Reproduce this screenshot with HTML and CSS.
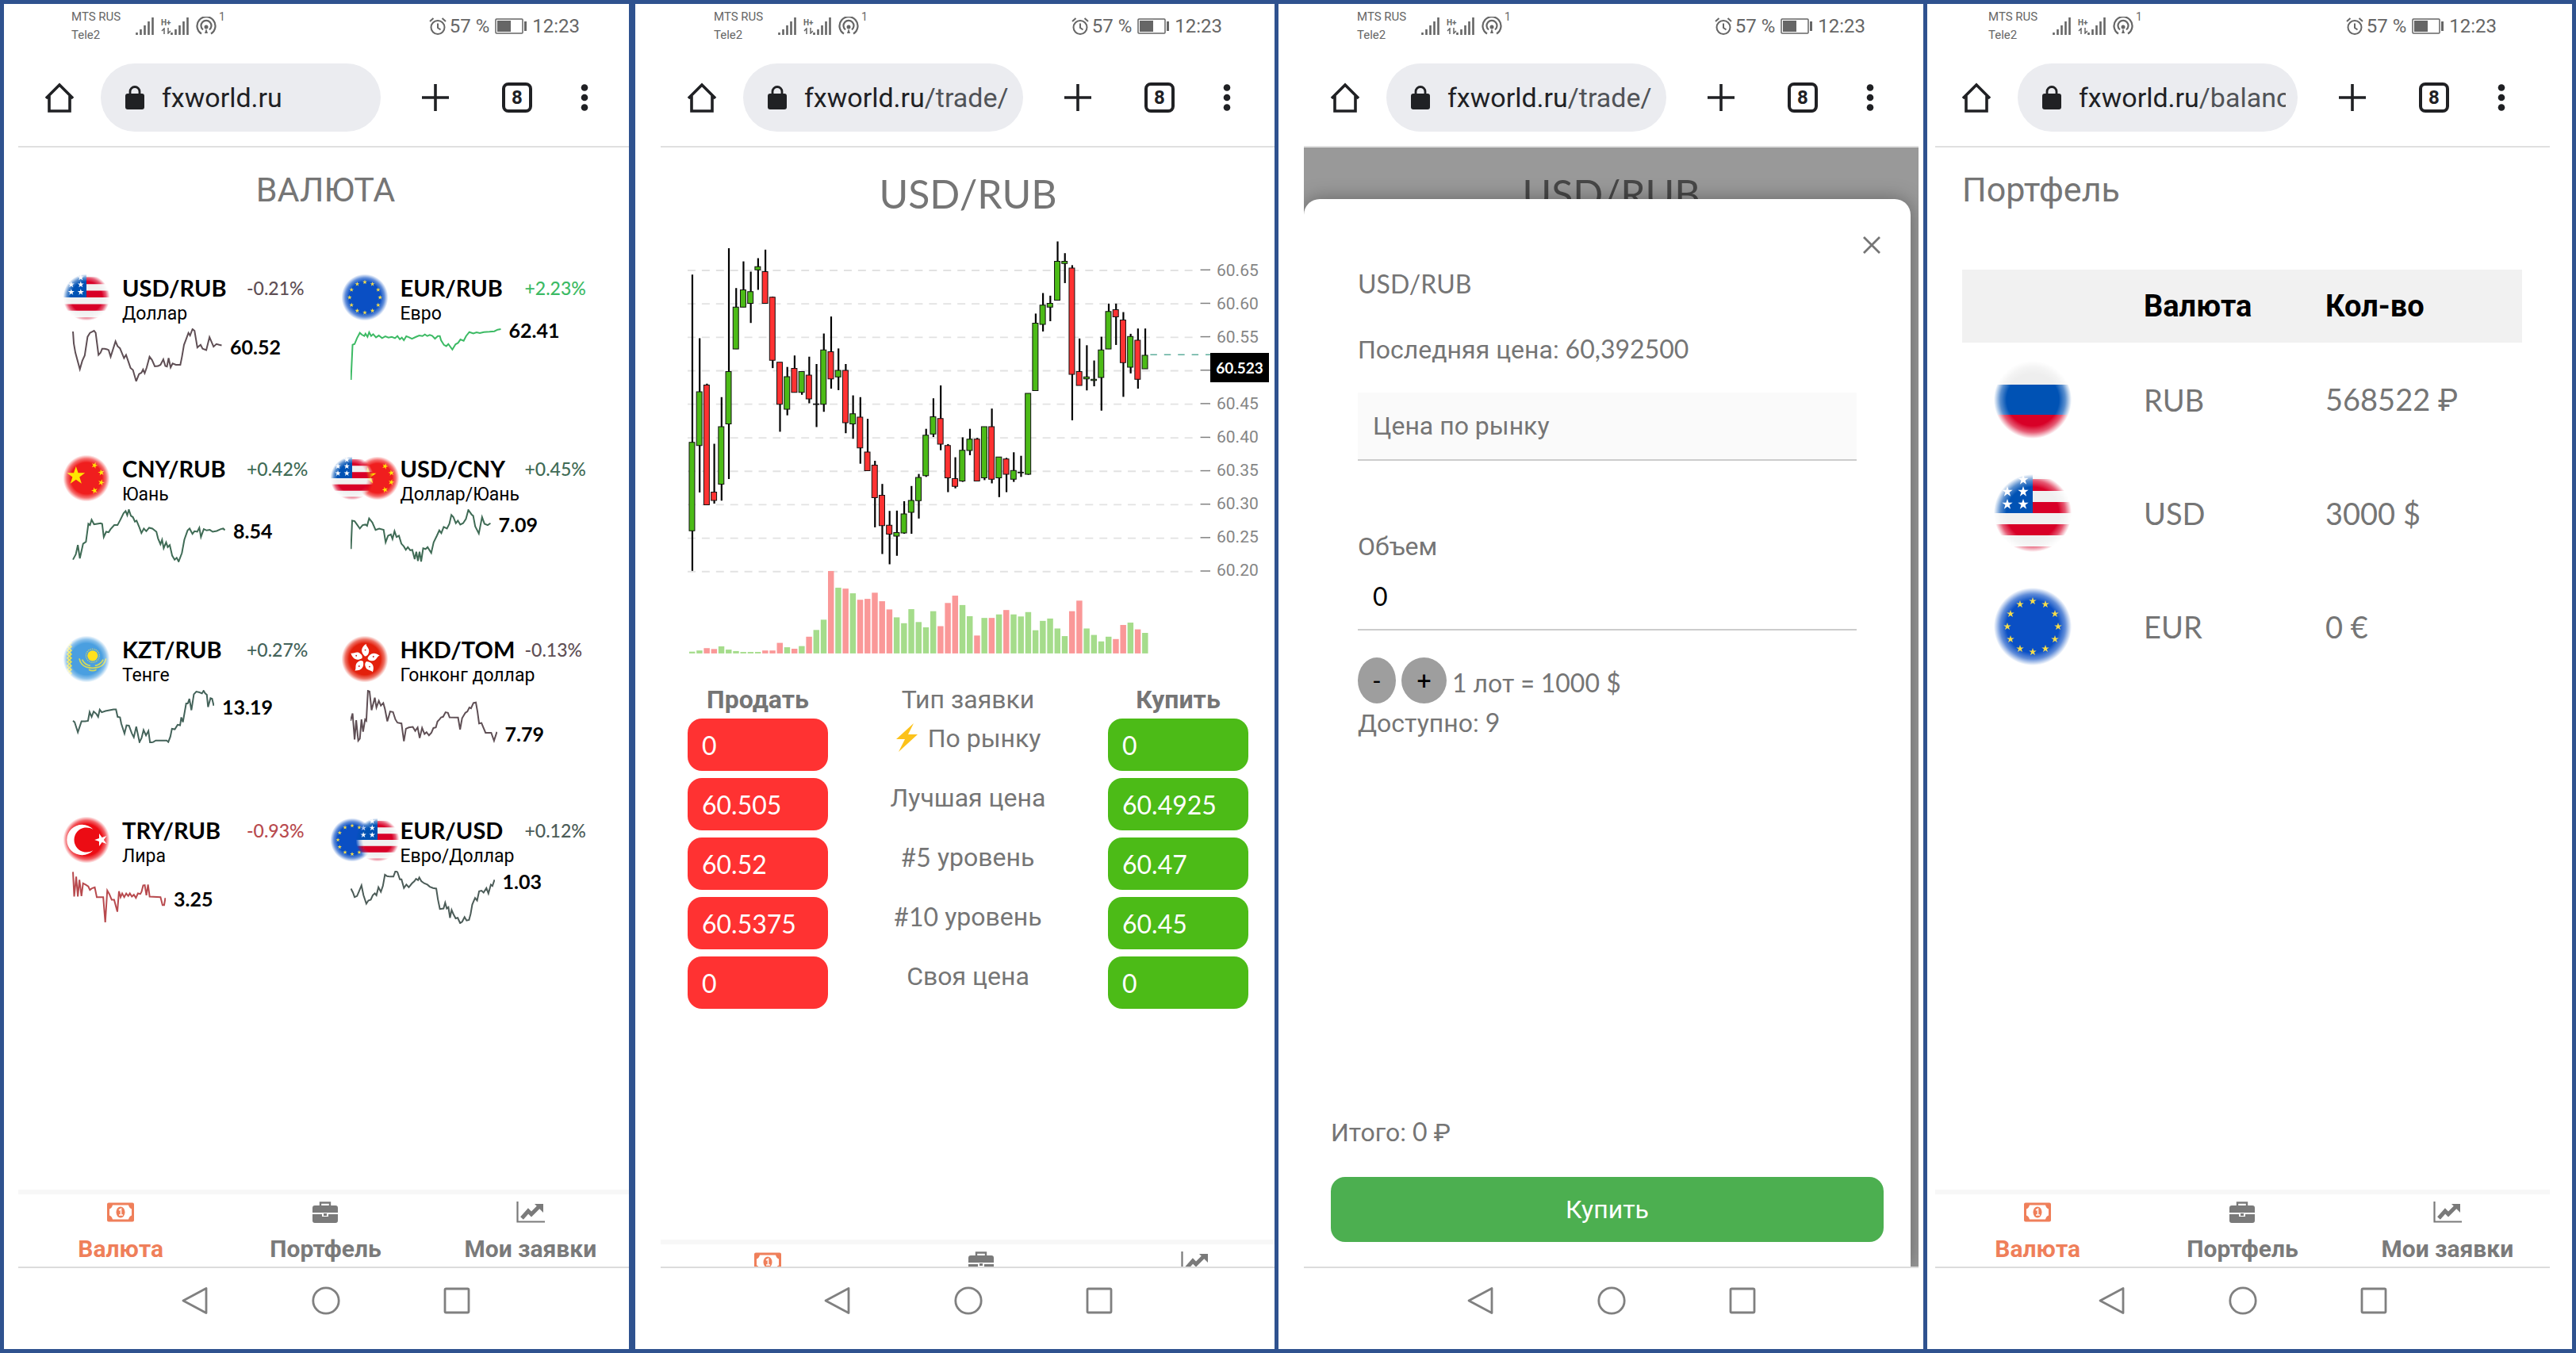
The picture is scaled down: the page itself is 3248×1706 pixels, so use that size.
FILE: index.html
```html
<!DOCTYPE html>
<html lang="ru">
<head>
<meta charset="utf-8">
<meta name="viewport" content="width=device-width, initial-scale=1">
<title>fxworld.ru</title>
<link rel="stylesheet" href="styles.css">
</head>
<body>
<svg class="defs" aria-hidden="true">
  <defs>
    <radialGradient id="fade" gradientUnits="userSpaceOnUse" cx="0" cy="0" r="50">
      <stop offset="0.66" stop-color="#fff"/>
      <stop offset="0.82" stop-color="#fff" stop-opacity="0.65"/>
      <stop offset="0.98" stop-color="#fff" stop-opacity="0"/>
    </radialGradient>
    <mask id="soft" maskUnits="userSpaceOnUse" x="-50" y="-50" width="100" height="100"><circle r="50" fill="url(#fade)"/></mask>
    <polygon id="star" points="0,-10 2.3,-3.1 9.5,-3.1 3.7,1.2 5.9,8.1 0,3.9 -5.9,8.1 -3.7,1.2 -9.5,-3.1 -2.3,-3.1"/>
    <path id="petal" d="M0 -6C-9 -14 -9 -24 3 -32C1 -27 12 -22 8 -13C7 -9 4 -6 0 -6Z"/>

    <symbol id="flag-us" viewBox="-50 -50 100 100"><g mask="url(#soft)">
      <rect x="-50" y="-50" width="100" height="100" fill="#f0f0f0"/>
      <path d="M-50 -43H50V-28H-50ZM-50 -14H50V0H-50ZM-50 14H50V28H-50ZM-50 42H50V50H-50Z" fill="#d80027"/>
      <rect x="-50" y="-50" width="50" height="50" fill="#0052b4"/>
      <g fill="#fff"><use href="#star" transform="translate(-12 -42) scale(.7)"/><use href="#star" transform="translate(-32 -27) scale(.7)"/><use href="#star" transform="translate(-12 -27) scale(.7)"/><use href="#star" transform="translate(-32 -11) scale(.7)"/><use href="#star" transform="translate(-12 -11) scale(.7)"/></g>
    </g></symbol>
    <symbol id="flag-eu" viewBox="-50 -50 100 100"><g mask="url(#soft)">
      <rect x="-50" y="-50" width="100" height="100" fill="#0a4fc4"/>
      <g fill="#f5dc4a"><use href="#star" transform="translate(0 -32) scale(.5)"/><use href="#star" transform="translate(16 -28) scale(.5)"/><use href="#star" transform="translate(28 -16) scale(.5)"/><use href="#star" transform="translate(32 0) scale(.5)"/><use href="#star" transform="translate(28 16) scale(.5)"/><use href="#star" transform="translate(16 28) scale(.5)"/><use href="#star" transform="translate(0 32) scale(.5)"/><use href="#star" transform="translate(-16 28) scale(.5)"/><use href="#star" transform="translate(-28 16) scale(.5)"/><use href="#star" transform="translate(-32 0) scale(.5)"/><use href="#star" transform="translate(-28 -16) scale(.5)"/><use href="#star" transform="translate(-16 -28) scale(.5)"/></g>
    </g></symbol>
    <symbol id="flag-ru" viewBox="-50 -50 100 100"><g mask="url(#soft)">
      <rect x="-50" y="-50" width="100" height="100" fill="#eee"/>
      <rect x="-50" y="-19" width="100" height="38" fill="#0052b4"/>
      <rect x="-50" y="19" width="100" height="31" fill="#d80027"/>
    </g></symbol>
    <symbol id="flag-cn" viewBox="-50 -50 100 100"><g mask="url(#soft)">
      <rect x="-50" y="-50" width="100" height="100" fill="#f01e1e"/>
      <g fill="#ffe600"><use href="#star" transform="translate(-22 -5) scale(2)"/><use href="#star" transform="translate(17 -27) rotate(20) scale(.7)"/><use href="#star" transform="translate(31 -12) rotate(-10) scale(.7)"/><use href="#star" transform="translate(31 9) rotate(15) scale(.7)"/><use href="#star" transform="translate(17 26) rotate(-15) scale(.7)"/></g>
    </g></symbol>
    <symbol id="flag-kz" viewBox="-50 -50 100 100"><g mask="url(#soft)">
      <rect x="-50" y="-50" width="100" height="100" fill="#4a9fe0"/>
      <path d="M-40 -50l8 8 -8 8 8 8 -8 8 8 8 -8 8 8 8 -8 8 8 8 -8 8 8 8 -8 8M-32 -50l-8 8 8 8 -8 8 8 8 -8 8 8 8 -8 8 8 8 -8 8 8 8 -8 8 8 8" fill="none" stroke="#e8e04a" stroke-width="3"/>
      <circle cx="13" cy="-7" r="14" fill="none" stroke="#d8d860" stroke-width="2" stroke-dasharray="2 2"/>
      <circle cx="13" cy="-7" r="11" fill="#ffe11e"/>
      <path d="M-15 -1Q-12 13 0 17Q13 21 26 17Q38 13 41 -1M-9 1Q-4 12 8 14M35 1Q30 12 18 14M5 22Q13 27 21 22" fill="none" stroke="#d3d85a" stroke-width="3"/>
    </g></symbol>
    <symbol id="flag-hk" viewBox="-50 -50 100 100"><g mask="url(#soft)">
      <rect x="-50" y="-50" width="100" height="100" fill="#e3200c"/>
      <g fill="#fff"><use href="#petal"/><use href="#petal" transform="rotate(72)"/><use href="#petal" transform="rotate(144)"/><use href="#petal" transform="rotate(216)"/><use href="#petal" transform="rotate(288)"/></g>
      <g fill="#c22"><circle cx="1" cy="-19" r="1.6"/><circle cx="18" cy="-5" r="1.6"/><circle cx="10" cy="16" r="1.6"/><circle cx="-12" cy="15" r="1.6"/><circle cx="-18" cy="-7" r="1.6"/></g>
    </g></symbol>
    <symbol id="flag-tr" viewBox="-50 -50 100 100"><g mask="url(#soft)">
      <rect x="-50" y="-50" width="100" height="100" fill="#ec0c14"/>
      <path d="M14 -22A32 32 0 1 0 14 22A26 26 0 1 1 14 -22Z" fill="#fff"/>
      <use href="#star" fill="#fff" transform="translate(31 0) rotate(-18) scale(1.4)"/>
    </g></symbol>

    <symbol id="signal" viewBox="0 0 24 22"><path d="M1.5 19V22M6.5 15V22M11.5 10V22M16.500 5V22M21.500 0V22" stroke="currentColor" stroke-width="2.600"/></symbol>
    <symbol id="arrows" viewBox="0 0 14 8"><path d="M4 8V1L1 4M9 0V7L12 4" fill="none" stroke="currentColor" stroke-width="1.500"/></symbol>
    <symbol id="hotspot" viewBox="0 0 26 24"><g fill="none" stroke="currentColor" stroke-width="2.200"><path d="M7 21.500A11.500 11.500 0 1 1 19 21.500M9 16.500A6.500 6.500 0 1 1 17 16.500"/></g><circle cx="13" cy="13" r="2.500" fill="currentColor"/><path d="M11 21L13 15L15 21Z" fill="currentColor"/></symbol>
    <symbol id="alarm" viewBox="0 0 22 22"><g fill="none" stroke="currentColor" stroke-width="2"><circle cx="11" cy="12.500" r="8.500"/><path d="M11 7.500V13L14.500 15.500M1 5L5.500 1M21 5L16.500 1"/></g></symbol>
    <symbol id="battery" viewBox="0 0 40 20"><rect x="1" y="1" width="34" height="18" rx="1" fill="none" stroke="currentColor" stroke-width="1.500"/><rect x="3" y="3" width="17" height="14" fill="currentColor"/><rect x="37" y="4" width="3" height="12" fill="currentColor"/></symbol>
    <symbol id="home" viewBox="0 0 38 38"><path d="M2 20L19 3L36 20M6 17V36H32V17" fill="none" stroke="currentColor" stroke-width="3.600"/></symbol>
    <symbol id="lock" viewBox="0 0 24 30"><rect x="0" y="10" width="24" height="20" rx="3" fill="currentColor"/><path d="M6 11V7.500A6 6 0 0 1 18 7.500V11" fill="none" stroke="currentColor" stroke-width="2.800"/></symbol>
    <symbol id="plus" viewBox="0 0 34 34"><path d="M17 0V34M0 17H34" stroke="currentColor" stroke-width="3.600"/></symbol>
    <symbol id="dots" viewBox="0 0 10 34"><g fill="currentColor"><circle cx="5" cy="4.500" r="4.300"/><circle cx="5" cy="17" r="4.300"/><circle cx="5" cy="29.500" r="4.300"/></g></symbol>
    <symbol id="money" viewBox="0 0 34 24"><path fill-rule="evenodd" d="M2 0H32Q34 0 34 2V22Q34 24 32 24H2Q0 24 0 22V2Q0 0 2 0ZM7 3Q6 7 3 8V16Q6 17 7 21H27Q28 17 31 16V8Q28 7 27 3Z" fill="currentColor"/><ellipse cx="17" cy="12" rx="5.500" ry="7" fill="currentColor"/><path d="M15 9.500L17.500 8V15M15 15.500H20" fill="none" stroke="#fff" stroke-width="1.600"/></symbol>
    <symbol id="case" viewBox="0 0 32 27"><path d="M10 5V1.500H22V5" fill="none" stroke="currentColor" stroke-width="2.400"/><path fill="currentColor" d="M3 5H29Q32 5 32 8V14H0V8Q0 5 3 5ZM0 16H12V19H20V16H32V24Q32 27 29 27H3Q0 27 0 24Z"/><rect x="14" y="15" width="4" height="3" fill="currentColor"/></symbol>
    <symbol id="trend" viewBox="0 0 36 27"><path d="M1.500 0V25.500H36" fill="none" stroke="currentColor" stroke-width="2.200"/><path d="M7 21L15 12L19 16L29 6" fill="none" stroke="currentColor" stroke-width="5"/><path d="M23 3H34V14Z" fill="currentColor"/></symbol>
    <symbol id="nav-back" viewBox="0 0 36 36"><path d="M3 18L32 2.500V33.500Z" fill="none" stroke="currentColor" stroke-width="2.800" stroke-linejoin="round"/></symbol>
    <symbol id="nav-home" viewBox="0 0 36 36"><circle cx="18" cy="18" r="16.200" fill="none" stroke="currentColor" stroke-width="2.800"/></symbol>
    <symbol id="nav-recent" viewBox="0 0 36 36"><rect x="3" y="3" width="30" height="30" rx="1.500" fill="none" stroke="currentColor" stroke-width="2.800"/></symbol>
    <symbol id="bolt" viewBox="0 0 28 36"><path d="M23 0L1 20L12 20L4 36L28 14L16 14Z" fill="#fcc21b"/></symbol>
    <symbol id="close" viewBox="0 0 22 22"><path d="M1 1L21 21M21 1L1 21" stroke="currentColor" stroke-width="2.800"/></symbol>
  </defs>
</svg>

<main class="board">

  <section class="slot slot--list">
    <div class="phone">
      <div class="status">
        <div class="carriers">MTS RUS<br>Tele2</div>
        <svg class="signal"><use href="#signal"/></svg>
        <div class="net">H+<svg class="arrows"><use href="#arrows"/></svg></div>
        <svg class="signal"><use href="#signal"/></svg>
        <svg class="hotspot"><use href="#hotspot"/></svg><span class="sim">1</span>
        <svg class="alarm"><use href="#alarm"/></svg><span class="charge">57 %</span>
        <svg class="battery"><use href="#battery"/></svg><time>12:23</time>
      </div>
      <div class="toolbar">
        <button class="tool" aria-label="Домой"><svg class="home"><use href="#home"/></svg></button>
        <div class="address"><svg class="lock"><use href="#lock"/></svg><span class="url">fxworld.ru</span></div>
        <button class="tool" aria-label="Новая вкладка"><svg class="plus"><use href="#plus"/></svg></button>
        <button class="tabs">8</button>
        <button class="tool" aria-label="Меню"><svg class="dots"><use href="#dots"/></svg></button>
      </div>
      <div class="view">
        <h1 class="heading">ВАЛЮТА</h1>
        <div class="pairs">
          <a class="pair" href="#usdrub">
            <svg class="flag"><use href="#flag-us"/></svg>
            <div class="info"><b class="name">USD/RUB</b><span class="change c-down">-0.21%</span><span class="sub">Доллар</span></div>
            <div class="spark"><svg class="c-down" style="width:189px" viewBox="178 343 370 200" preserveAspectRatio="none"><polyline points="180,355 182,400 186,435 197,497 203,465 209,445 216,375 222,360 232,352 236,360 243,443 248,435 252,420 258,420 264,422 268,425 273,450 285,392 290,410 296,418 301,437 306,455 311,443 316,465 322,492 328,500 336,542 343,515 349,510 353,498 357,512 362,490 369,450 375,462 382,486 390,485 396,480 403,460 408,485 412,487 416,455 421,490 426,475 434,480 445,480 449,450 454,405 459,385 465,360 469,370 475,346 480,352 487,415 495,405 500,420 509,425 517,376 527,412 534,402 541,405 547,407"/></svg><b class="price" style="margin-top:8px">60.52</b></div>
          </a>
          <a class="pair" href="#eurrub">
            <svg class="flag"><use href="#flag-eu"/></svg>
            <div class="info"><b class="name">EUR/RUB</b><span class="change c-best">+2.23%</span><span class="sub">Евро</span></div>
            <div class="spark"><svg class="c-best" style="width:190px" viewBox="866 343 373 200" preserveAspectRatio="none"><polyline points="867,537 871,405 876,402 882,380 889,360 894,367 900,372 903,363 908,375 912,358 917,372 922,365 929,377 936,370 944,380 952,373 960,378 968,375 976,380 982,372 988,384 993,378 998,388 1004,373 1010,376 1018,382 1028,375 1036,370 1044,372 1050,366 1056,372 1062,368 1068,371 1075,382 1082,372 1087,372 1090,388 1097,405 1103,410 1108,402 1118,423 1126,403 1132,398 1138,385 1146,390 1152,372 1160,357 1170,362 1178,358 1186,361 1196,357 1210,356 1222,354 1230,348 1238,346"/></svg><b class="price" style="margin-top:-13px">62.41</b></div>
          </a>
          <a class="pair" href="#cnyrub">
            <svg class="flag"><use href="#flag-cn"/></svg>
            <div class="info"><b class="name">CNY/RUB</b><span class="change c-up">+0.42%</span><span class="sub">Юань</span></div>
            <div class="spark"><svg class="c-up" style="width:193px" viewBox="178 1025 378 200" preserveAspectRatio="none"><polyline points="180,1215 187,1195 192,1160 197,1210 205,1155 212,1148 218,1080 222,1085 226,1065 232,1082 240,1080 248,1078 252,1080 256,1130 262,1110 268,1112 273,1100 282,1085 290,1085 297,1065 305,1040 310,1032 314,1048 318,1027 323,1050 328,1055 333,1072 337,1068 343,1090 349,1115 355,1098 361,1108 368,1095 376,1098 386,1110 390,1135 396,1157 400,1140 404,1172 410,1150 414,1168 419,1160 425,1200 431,1215 436,1208 441,1222 449,1190 455,1140 463,1105 468,1098 475,1118 480,1108 487,1110 492,1095 496,1130 503,1100 510,1105 518,1103 525,1110 535,1107 545,1100 551,1098 555,1104"/></svg><b class="price" style="margin-top:12px">8.54</b></div>
          </a>
          <a class="pair" href="#usdcny">
            <div class="flags"><svg class="flag flag--front"><use href="#flag-us"/></svg><svg class="flag"><use href="#flag-cn"/></svg></div>
            <div class="info"><b class="name">USD/CNY</b><span class="change c-up">+0.45%</span><span class="sub">Доллар/Юань</span></div>
            <div class="spark"><svg class="c-up" style="width:177px" viewBox="866 1025 348 200" preserveAspectRatio="none"><polyline points="867,1175 870,1068 876,1070 882,1083 889,1098 896,1085 903,1083 907,1088 912,1060 920,1075 928,1103 937,1098 948,1103 953,1150 959,1125 966,1120 970,1137 975,1108 980,1130 986,1125 992,1155 998,1165 1003,1178 1008,1168 1014,1180 1019,1178 1025,1213 1029,1185 1033,1220 1037,1185 1041,1222 1046,1172 1052,1175 1057,1168 1066,1190 1072,1150 1080,1125 1086,1105 1091,1115 1097,1092 1105,1098 1111,1080 1116,1047 1121,1055 1127,1078 1132,1068 1138,1083 1145,1078 1152,1062 1158,1028 1166,1045 1170,1050 1175,1090 1184,1117 1192,1055 1198,1080 1206,1085 1213,1078"/></svg><b class="price" style="margin-top:4px">7.09</b></div>
          </a>
          <a class="pair" href="#kztrub">
            <svg class="flag"><use href="#flag-kz"/></svg>
            <div class="info"><b class="name">KZT/RUB</b><span class="change c-mild">+0.27%</span><span class="sub">Тенге</span></div>
            <div class="spark"><svg class="c-mild" style="width:179px" viewBox="178 329 350 200" preserveAspectRatio="none"><polyline points="180,445 184,450 192,488 201,447 210,447 217,445 221,412 226,430 231,410 237,418 242,430 246,403 251,413 260,408 270,405 280,402 286,402 290,430 296,432 299,455 307,493 312,462 318,463 325,492 330,507 336,467 344,525 349,510 354,480 360,500 366,483 370,527 378,525 384,519 411,519 415,525 420,505 424,475 431,477 438,460 444,462 447,432 451,450 459,380 463,380 467,362 472,405 478,345 484,335 492,338 498,342 502,332 506,342 510,347 513,393 519,360 523,362 527,388"/></svg><b class="price" style="margin-top:6px">13.19</b></div>
          </a>
          <a class="pair" href="#hkdtom">
            <svg class="flag"><use href="#flag-hk"/></svg>
            <div class="info"><b class="name">HKD/TOM</b><span class="change c-down">-0.13%</span><span class="sub">Гонконг доллар</span></div>
            <div class="spark"><svg class="c-down" style="width:185px" viewBox="866 329 363 200" preserveAspectRatio="none"><polyline points="866,445 871,417 876,515 880,443 885,520 889,512 893,440 897,486 902,440 905,445 909,332 913,335 918,405 926,358 930,395 936,370 941,388 947,378 951,400 957,447 964,410 971,412 977,440 982,452 992,455 998,522 1003,475 1010,470 1020,468 1026,483 1032,470 1037,510 1043,472 1049,495 1054,488 1060,500 1066,490 1071,472 1077,470 1081,448 1086,440 1090,432 1095,430 1101,413 1107,415 1111,432 1132,433 1137,478 1142,435 1150,415 1155,410 1160,395 1164,398 1170,378 1176,376 1180,410 1184,455 1190,453 1194,468 1200,490 1214,490 1221,520 1228,487"/></svg><b class="price" style="margin-top:40px">7.79</b></div>
          </a>
          <a class="pair" href="#tryrub">
            <svg class="flag"><use href="#flag-tr"/></svg>
            <div class="info"><b class="name">TRY/RUB</b><span class="change c-worst">-0.93%</span><span class="sub">Лира</span></div>
            <div class="spark"><svg class="c-worst" style="width:118px" viewBox="178 1013 232 200" preserveAspectRatio="none"><polyline points="180,1017 183,1110 188,1035 192,1110 196,1047 201,1108 205,1060 211,1065 218,1072 222,1085 228,1078 234,1075 239,1112 255,1112 260,1207 265,1087 270,1100 276,1122 282,1122 290,1167 294,1090 298,1112 302,1098 307,1112 312,1098 317,1108 321,1098 326,1110 331,1103 336,1115 341,1098 347,1100 350,1092 354,1068 358,1067 362,1105 366,1065 370,1110 397,1112 402,1142 406,1142 409,1115"/></svg><b class="price" style="margin-top:20px">3.25</b></div>
          </a>
          <a class="pair" href="#eurusd">
            <div class="flags"><svg class="flag"><use href="#flag-eu"/></svg><svg class="flag flag--front"><use href="#flag-us"/></svg></div>
            <div class="info"><b class="name">EUR/USD</b><span class="change c-flat">+0.12%</span><span class="sub">Евро/Доллар</span></div>
            <div class="spark"><svg class="c-flat" style="width:182px" viewBox="866 1013 357 200" preserveAspectRatio="none"><polyline points="867,1080 872,1095 876,1112 882,1108 887,1090 893,1068 898,1105 905,1137 910,1125 916,1122 921,1105 926,1098 930,1105 935,1075 941,1092 946,1070 951,1028 956,1033 964,1035 972,1035 977,1014 982,1018 988,1045 992,1045 998,1078 1004,1065 1010,1075 1018,1060 1024,1052 1028,1043 1033,1048 1036,1038 1041,1052 1048,1060 1056,1065 1062,1073 1070,1078 1078,1080 1082,1120 1087,1157 1096,1155 1100,1133 1104,1155 1108,1150 1112,1190 1116,1160 1121,1178 1126,1192 1131,1190 1137,1210 1142,1205 1148,1187 1153,1200 1159,1198 1163,1175 1167,1140 1174,1115 1179,1125 1184,1090 1190,1088 1195,1095 1202,1078 1207,1098 1213,1065 1217,1070 1222,1047"/></svg><b class="price" style="margin-top:-2px">1.03</b></div>
          </a>
        </div>
        <nav class="tabbar">
          <a class="tab tab--on" href="#rates"><svg class="money"><use href="#money"/></svg>Валюта</a>
          <a class="tab" href="#portfolio"><svg class="case"><use href="#case"/></svg>Портфель</a>
          <a class="tab" href="#orders"><svg class="trend"><use href="#trend"/></svg>Мои заявки</a>
        </nav>
      </div>
      <div class="sysnav"><svg><use href="#nav-back"/></svg><svg><use href="#nav-home"/></svg><svg><use href="#nav-recent"/></svg></div>
    </div>
  </section>

  <section class="slot slot--trade">
    <div class="phone">
      <div class="status">
        <div class="carriers">MTS RUS<br>Tele2</div>
        <svg class="signal"><use href="#signal"/></svg>
        <div class="net">H+<svg class="arrows"><use href="#arrows"/></svg></div>
        <svg class="signal"><use href="#signal"/></svg>
        <svg class="hotspot"><use href="#hotspot"/></svg><span class="sim">1</span>
        <svg class="alarm"><use href="#alarm"/></svg><span class="charge">57 %</span>
        <svg class="battery"><use href="#battery"/></svg><time>12:23</time>
      </div>
      <div class="toolbar">
        <button class="tool" aria-label="Домой"><svg class="home"><use href="#home"/></svg></button>
        <div class="address"><svg class="lock"><use href="#lock"/></svg><span class="url">fxworld.ru<span class="path">/trade/</span></span></div>
        <button class="tool" aria-label="Новая вкладка"><svg class="plus"><use href="#plus"/></svg></button>
        <button class="tabs">8</button>
        <button class="tool" aria-label="Меню"><svg class="dots"><use href="#dots"/></svg></button>
      </div>
      <div class="view">
        <h1 class="heading heading--pair">USD/RUB</h1>
        <div class="chart">
          <svg class="chart__plot" id="plot" viewBox="55 80 1325 1420" preserveAspectRatio="none"></svg>
          <div class="axis"><span>60.65</span><span>60.60</span><span>60.55</span><span></span><span>60.45</span><span>60.40</span><span>60.35</span><span>60.30</span><span>60.25</span><span>60.20</span></div>
          <div class="last">60.523</div>
        </div>
        <form class="orders">
          <b class="orders__head">Продать</b><span class="orders__head">Тип заявки</span><b class="orders__head">Купить</b>
          <input class="quote quote--sell" aria-label="Продать по рынку" value="0"><span class="kind"><svg class="bolt"><use href="#bolt"/></svg>По рынку</span><input class="quote quote--buy" aria-label="Купить по рынку" value="0">
          <input class="quote quote--sell" aria-label="Продать, лучшая цена" value="60.505"><span class="kind">Лучшая цена</span><input class="quote quote--buy" aria-label="Купить, лучшая цена" value="60.4925">
          <input class="quote quote--sell" aria-label="Продать, 5 уровень" value="60.52"><span class="kind"><span class="latin">#5 </span>уровень</span><input class="quote quote--buy" aria-label="Купить, 5 уровень" value="60.47">
          <input class="quote quote--sell" aria-label="Продать, 10 уровень" value="60.5375"><span class="kind"><span class="latin">#10 </span>уровень</span><input class="quote quote--buy" aria-label="Купить, 10 уровень" value="60.45">
          <input class="quote quote--sell" aria-label="Продать, своя цена" value="0"><span class="kind">Своя цена</span><input class="quote quote--buy" aria-label="Купить, своя цена" value="0">
        </form>
        <nav class="tabbar">
          <a class="tab tab--on" href="#rates" aria-label="Валюта"><svg class="money"><use href="#money"/></svg></a>
          <a class="tab" href="#portfolio" aria-label="Портфель"><svg class="case"><use href="#case"/></svg></a>
          <a class="tab" href="#orders" aria-label="Мои заявки"><svg class="trend"><use href="#trend"/></svg></a>
        </nav>
      </div>
      <div class="sysnav"><svg><use href="#nav-back"/></svg><svg><use href="#nav-home"/></svg><svg><use href="#nav-recent"/></svg></div>
    </div>
  </section>

  <section class="slot slot--order">
    <div class="phone">
      <div class="status">
        <div class="carriers">MTS RUS<br>Tele2</div>
        <svg class="signal"><use href="#signal"/></svg>
        <div class="net">H+<svg class="arrows"><use href="#arrows"/></svg></div>
        <svg class="signal"><use href="#signal"/></svg>
        <svg class="hotspot"><use href="#hotspot"/></svg><span class="sim">1</span>
        <svg class="alarm"><use href="#alarm"/></svg><span class="charge">57 %</span>
        <svg class="battery"><use href="#battery"/></svg><time>12:23</time>
      </div>
      <div class="toolbar">
        <button class="tool" aria-label="Домой"><svg class="home"><use href="#home"/></svg></button>
        <div class="address"><svg class="lock"><use href="#lock"/></svg><span class="url">fxworld.ru<span class="path">/trade/</span></span></div>
        <button class="tool" aria-label="Новая вкладка"><svg class="plus"><use href="#plus"/></svg></button>
        <button class="tabs">8</button>
        <button class="tool" aria-label="Меню"><svg class="dots"><use href="#dots"/></svg></button>
      </div>
      <div class="view view--dim">
        <h1 class="heading heading--pair">USD/RUB</h1>
        <form class="sheet">
          <button class="sheet__close" type="button" aria-label="Закрыть"><svg><use href="#close"/></svg></button>
          <div class="fields">
            <p class="line latin">USD/RUB</p>
            <p class="line line--last">Последняя цена: <span class="latin">60,392500</span></p>
            <input class="field field--market" aria-label="Цена" placeholder="Цена по рынку">
            <label class="line" for="volume">Объем</label>
            <input class="field latin" id="volume" value="0">
            <div class="lots"><button class="step" type="button">-</button><button class="step step--plus" type="button">+</button><span><span class="latin">1</span> лот = <span class="latin">1000 $</span></span></div>
            <p class="line">Доступно: <span class="latin">9</span></p>
          </div>
          <p class="line line--total">Итого: <span class="latin">0 </span>₽</p>
          <button class="submit">Купить</button>
        </form>
      </div>
      <div class="sysnav"><svg><use href="#nav-back"/></svg><svg><use href="#nav-home"/></svg><svg><use href="#nav-recent"/></svg></div>
    </div>
  </section>

  <section class="slot slot--balance">
    <div class="phone">
      <div class="status">
        <div class="carriers">MTS RUS<br>Tele2</div>
        <svg class="signal"><use href="#signal"/></svg>
        <div class="net">H+<svg class="arrows"><use href="#arrows"/></svg></div>
        <svg class="signal"><use href="#signal"/></svg>
        <svg class="hotspot"><use href="#hotspot"/></svg><span class="sim">1</span>
        <svg class="alarm"><use href="#alarm"/></svg><span class="charge">57 %</span>
        <svg class="battery"><use href="#battery"/></svg><time>12:23</time>
      </div>
      <div class="toolbar">
        <button class="tool" aria-label="Домой"><svg class="home"><use href="#home"/></svg></button>
        <div class="address"><svg class="lock"><use href="#lock"/></svg><span class="url">fxworld.ru<span class="path">/balanc</span></span></div>
        <button class="tool" aria-label="Новая вкладка"><svg class="plus"><use href="#plus"/></svg></button>
        <button class="tabs">8</button>
        <button class="tool" aria-label="Меню"><svg class="dots"><use href="#dots"/></svg></button>
      </div>
      <div class="view">
        <h1 class="heading heading--left">Портфель</h1>
        <table class="balance">
          <thead><tr><td></td><th>Валюта</th><th>Кол-во</th></tr></thead>
          <tbody>
            <tr><td><svg class="flag flag--big"><use href="#flag-ru"/></svg></td><td>RUB</td><td>568522 <span class="sign">₽</span></td></tr>
            <tr><td><svg class="flag flag--big"><use href="#flag-us"/></svg></td><td>USD</td><td>3000 $</td></tr>
            <tr><td><svg class="flag flag--big"><use href="#flag-eu"/></svg></td><td>EUR</td><td>0 €</td></tr>
          </tbody>
        </table>
        <nav class="tabbar">
          <a class="tab tab--on" href="#rates"><svg class="money"><use href="#money"/></svg>Валюта</a>
          <a class="tab" href="#portfolio"><svg class="case"><use href="#case"/></svg>Портфель</a>
          <a class="tab" href="#orders"><svg class="trend"><use href="#trend"/></svg>Мои заявки</a>
        </nav>
      </div>
      <div class="sysnav"><svg><use href="#nav-back"/></svg><svg><use href="#nav-home"/></svg><svg><use href="#nav-recent"/></svg></div>
    </div>
  </section>

</main>
<script src="chart.js"></script>
</body>
</html>
```
FILE: styles.css
```css
* { box-sizing: border-box; }

body {
  margin: 0;
  background: #2f528f;
  color: #757575;
  font-family: Roboto, sans-serif;
}

a { color: inherit; text-decoration: none; }
button, input { font: inherit; color: inherit; border: 0; padding: 0; margin: 0; background: none; }
p { margin: 0; }
svg { display: block; flex: none; }
.defs { position: absolute; width: 0; height: 0; }
.latin { font-family: Lato, sans-serif; }

/* four phones side by side */
.board {
  display: grid;
  grid-template-columns: 796fr 811fr 818fr 813fr;
  min-height: 100vh;
  border: 5px solid #2f528f;
}
.slot {
  display: flex;
  min-width: 0;
  overflow: hidden;
  background: #fff;
  border-right: 5px solid #2f528f;
}
.slot--list { padding-left: 18px; border-right-width: 8px; }
.slot--list .phone { margin-right: -5px; }
.slot--trade { padding-left: 32px; }
.slot--trade .phone { margin-right: -1px; }
.slot--order { padding: 0 6px 0 32px; }
.slot--balance { padding: 0 28px 0 10px; border-right: 0; }
.phone { flex: 1; min-width: 0; display: flex; flex-direction: column; }

/* status bar */
.status {
  display: flex;
  align-items: center;
  height: 56px;
  padding: 0 67px;
  color: #666;
  font-size: 24px;
}
.carriers { width: 81px; font-size: 15px; line-height: 23px; }
.signal { width: 24px; height: 22px; }
.net { width: 20px; padding-left: 8px; font-size: 10px; line-height: 12px; font-weight: 700; }
.arrows { width: 14px; height: 8px; }
.hotspot { width: 26px; height: 24px; margin-left: 8px; }
.sim { align-self: flex-start; margin: 8px auto 0 3px; font-size: 14px; }
.alarm { width: 22px; height: 22px; margin-right: 4px; }
.battery { width: 40px; height: 20px; margin: 0 7px; }

/* browser toolbar */
.toolbar {
  display: flex;
  align-items: center;
  padding: 19px 56px 18px 33px;
  border-bottom: 2px solid #e0e0e0;
  color: #202124;
}
.home { width: 38px; height: 38px; }
.address {
  flex: 1;
  min-width: 0;
  display: flex;
  align-items: center;
  height: 86px;
  margin: 0 52px 0 33px;
  padding: 0 15px 0 31px;
  border-radius: 43px;
  background: #ebecf0;
  font-size: 34px;
}
.lock { width: 24px; height: 30px; margin-right: 22px; }
.url { flex: 1; overflow: hidden; white-space: nowrap; }
.path { color: #505357; }
.plus { width: 34px; height: 34px; }
.tabs {
  width: 38px;
  height: 38px;
  margin: 0 61px 0 67px;
  border: 4px solid #202124;
  border-radius: 8px;
  font-size: 24px;
  line-height: 30px;
  font-weight: 700;
}
.dots { width: 10px; height: 34px; }

/* page area */
.view {
  position: relative;
  flex: 1;
  display: flex;
  flex-direction: column;
  overflow: hidden;
}
.heading { margin: 0; padding: 28px 34px 0; font-size: 43px; line-height: 50px; font-weight: 400; text-align: center; }
.heading--pair { font-family: Lato, sans-serif; font-size: 50px; line-height: 60px; }
.heading--left { text-align: left; }

/* currency pairs */
.pairs {
  display: grid;
  grid-template-columns: 1fr 1fr;
  grid-auto-rows: 228px;
  margin: 81px 18px 0 56px;
  color: #000;
}
.pair { display: grid; grid-template-columns: 60px 1fr; column-gap: 15px; align-content: start; }
.flag { width: 60px; height: 60px; }
.flags { display: flex; align-items: center; justify-content: center; height: 60px; }
.flags .flag { width: 56px; height: 56px; margin: 0 -12px; }
.flags .flag--front { z-index: 1; }
.info { display: grid; grid-template-columns: 157px 1fr; align-items: center; }
.name { font-family: Lato, sans-serif; font-size: 29px; line-height: 36px; }
.change { font-family: Lato, sans-serif; font-size: 23px; line-height: 36px; font-weight: 500; }
.sub { grid-column: 1 / -1; font-size: 23px; line-height: 30px; }
.spark { grid-column: 1 / -1; display: flex; gap: 10px; margin: 3px 0 0 12px; }
.spark svg { height: 67px; }
.spark polyline { fill: none; stroke: currentColor; stroke-width: 2; vector-effect: non-scaling-stroke; }
.price { font-family: Lato, sans-serif; font-size: 25px; line-height: 30px; }
.c-down { color: #5f4f55; }
.c-best { color: #3cba64; }
.c-up { color: #3f6b55; }
.c-mild { color: #44635a; }
.c-flat { color: #4c5c58; }
.c-worst { color: #b84a4e; }

/* tab bar */
.tabbar { display: grid; grid-template-columns: repeat(3, 1fr); margin-top: auto; border-top: 6px solid #f7f7f7; }
.tab {
  display: flex;
  flex-direction: column;
  align-items: center;
  height: 91px;
  padding-top: 9px;
  font-size: 30px;
  line-height: 34px;
  font-weight: 700;
  color: #7a7a7a;
}
.tab--on { color: #ef7f5a; }
.tab svg { height: 27px; margin-bottom: 16px; }
.money { width: 34px; }
.case { width: 32px; }
.trend { width: 36px; }
.slot--trade .tabbar { width: calc(100% + 34px); margin-bottom: -63px; }

/* system navigation */
.sysnav { display: flex; justify-content: center; gap: 129px; padding: 23px 0 43px; border-top: 2px solid #dcdcdc; color: #808080; }
.sysnav svg { width: 36px; height: 36px; }

/* price chart */
.chart { position: relative; display: flex; margin: 26px 8px 0 34px; }
.chart__plot { flex: 1; min-width: 0; height: 525px; }
.axis { width: 74px; padding: 20px 0 0 8px; font-size: 21px; color: #858585; }
.axis span { display: block; height: 42px; line-height: 42px; }
.last {
  position: absolute;
  right: 0;
  top: 145px;
  width: 74px;
  background: #000;
  color: #fff;
  font: 700 19px/37px Lato, sans-serif;
  text-align: center;
}

/* order grid */
.orders {
  display: grid;
  grid-template-columns: 177px 1fr 177px;
  row-gap: 9px;
  padding: 37px 34px 0;
  font-size: 32px;
  text-align: center;
}
.orders__head { line-height: 40px; margin-bottom: -5px; }
.quote {
  width: 100%;
  height: 66px;
  padding: 0 18px;
  border-radius: 18px;
  color: #fff;
  font: 32px Lato, sans-serif;
}
.quote--sell { background: #ff3232; }
.quote--buy { background: #4cbb17; }
.kind { display: flex; justify-content: center; white-space: pre; line-height: 50px; }
.bolt { width: 28px; height: 36px; margin: 6px 13px 0 0; }

/* order sheet */
.view--dim { background: #999; color: #474747; }
.sheet {
  position: absolute;
  inset: 65px 10px 0 0;
  display: flex;
  flex-direction: column;
  padding: 0 34px 31px;
  border-radius: 20px 20px 0 0;
  background: #fff;
  box-shadow: 0 0 24px rgba(0, 0, 0, 0.35);
  color: #757575;
  font-size: 32px;
}
.sheet__close { align-self: flex-end; margin: 47px 4px 0; }
.sheet__close svg { width: 22px; height: 22px; }
.fields { padding: 18px 34px 0; }
.line { display: block; line-height: 40px; }
.line--last { margin: 42px 0 34px; }
.field { display: block; width: 100%; height: 86px; padding: 0 19px; border-bottom: 2px solid #ccc; color: #000; }
.field--market { margin-bottom: 88px; background: #fafafa; }
.field--market::placeholder { color: #757575; opacity: 1; }
.lots { display: flex; align-items: center; gap: 7px; margin: 34px 0 4px; }
.lots > span { padding-top: 6px; }
.step { width: 48px; height: 58px; border-radius: 50%; background: #9e9e9e; color: #000; }
.step--plus { width: 57px; }
.line--total { margin-top: auto; }
.submit { height: 82px; margin-top: 36px; border-radius: 18px; background: #4caf50; color: #fff; }

/* balance */
.balance { width: calc(100% - 69px); margin: 76px 35px 0 34px; border-collapse: collapse; table-layout: fixed; font: 38px Lato, sans-serif; text-align: left; }
.balance td, .balance th { width: 229px; padding: 0; }
.balance td:last-child, .balance th:last-child { width: auto; }
.balance thead tr { height: 92px; background: #f1f1f1; color: #000; font-family: Roboto, sans-serif; }
.balance tbody tr { height: 143px; }
.sign { font-family: Roboto, sans-serif; }
.flag--big { width: 100px; height: 100px; margin-left: 39px; }
```
FILE: chart.js
```js
// Candles: [high, body top, body bottom, low, rising, volume top], in plot units.
const candles = [
  [205,777,1079,1215,1,1491],[422,605,788,948,1,1487],[577,582,990,990,0,1479],[782,947,975,986,0,1482],
  [623,724,920,976,1,1473],[115,536,714,902,1,1484],[251,316,459,459,1,1489],[160,257,316,316,1,1492],
  [195,263,303,370,1,1492],[149,178,189,257,1,1492],[120,195,303,303,0,1487],[280,282,497,524,0,1487],
  [504,504,647,741,0,1461],[520,553,664,685,1,1476],[481,525,607,607,0,1481],[536,536,607,615,1,1472],
  [485,548,629,644,0,1440],[510,646,648,725,1,1417],[406,462,647,673,1,1382],[348,468,561,594,0,1216],
  [457,532,554,599,1,1273],[510,532,710,746,0,1276],[617,680,714,765,1,1292],[623,691,796,850,0,1314],
  [697,810,874,874,0,1311],[840,855,966,1067,0,1290],[919,958,1061,1158,0,1319],[1011,1060,1090,1193,0,1347],
  [1010,1085,1097,1164,1,1374],[978,1021,1086,1089,1,1394],[926,975,1016,1089,1,1346],[885,897,976,1037,1,1390],
  [731,753,891,895,1,1408],[627,690,749,759,1,1353],[583,696,783,804,0,1404],[783,788,898,947,0,1325],
  [828,901,927,934,0,1300],[760,804,909,912,1,1332],[731,766,805,821,1,1370],[762,766,909,909,0,1436],
  [724,724,898,906,1,1376],[662,724,903,917,0,1376],[827,827,898,964,1,1364],[830,834,886,947,0,1349],
  [811,873,903,912,1,1364],[823,879,881,895,1,1371],[610,610,886,888,1,1356],[338,371,601,601,1,1418],
  [268,309,375,399,1,1386],[277,303,316,364,1,1378],[92,160,292,292,1,1412],[132,160,167,234,1,1438],
  [173,183,545,702,0,1353],[423,536,583,583,0,1317],[446,554,561,600,1,1412],[498,562,566,586,1,1434],
  [417,462,556,669,1,1456],[304,331,459,459,1,1440],[304,325,349,445,0,1448],[333,360,505,622,0,1400],
  [407,416,521,542,1,1392],[389,429,562,594,0,1415],[389,480,526,526,1,1427]
];

const FIRST_X = 66, STEP = 18.52, BODY = 14, FLOOR = 1497;
const parts = [];

for (let i = 0; i < 10; i++) {
  const y = Math.round(191 + i * 114.1);
  parts.push(`<path d="M55 ${y}H1350" stroke="#e2e2e2" stroke-width="5" stroke-dasharray="20 16"/>`);
  parts.push(`<path d="M1355 ${y - 2}H1380" stroke="#808080" stroke-width="4"/>`);
}
parts.push('<path d="M1228 478H1380" stroke="#5fae9c" stroke-width="4" stroke-dasharray="17 18"/>');

candles.forEach(([high, top, bottom, low, rising, volume], i) => {
  const x = FIRST_X + i * STEP;
  const left = x - BODY / 2;
  parts.push(`<rect x="${left}" y="${volume}" width="15" height="${FLOOR - volume}" fill="${rising ? '#a5dc8b' : '#fa9898'}"/>`);
  parts.push(`<path d="M${x + 1} ${high}V${low}" stroke="#000" stroke-width="4.4"/>`);
  parts.push(`<rect x="${left}" y="${top}" width="${BODY}" height="${bottom - top}" fill="${rising ? '#4cbb17' : '#ff3232'}" stroke="#111" stroke-width="1" vector-effect="non-scaling-stroke"/>`);
});

document.getElementById('plot').innerHTML = parts.join('');
```
